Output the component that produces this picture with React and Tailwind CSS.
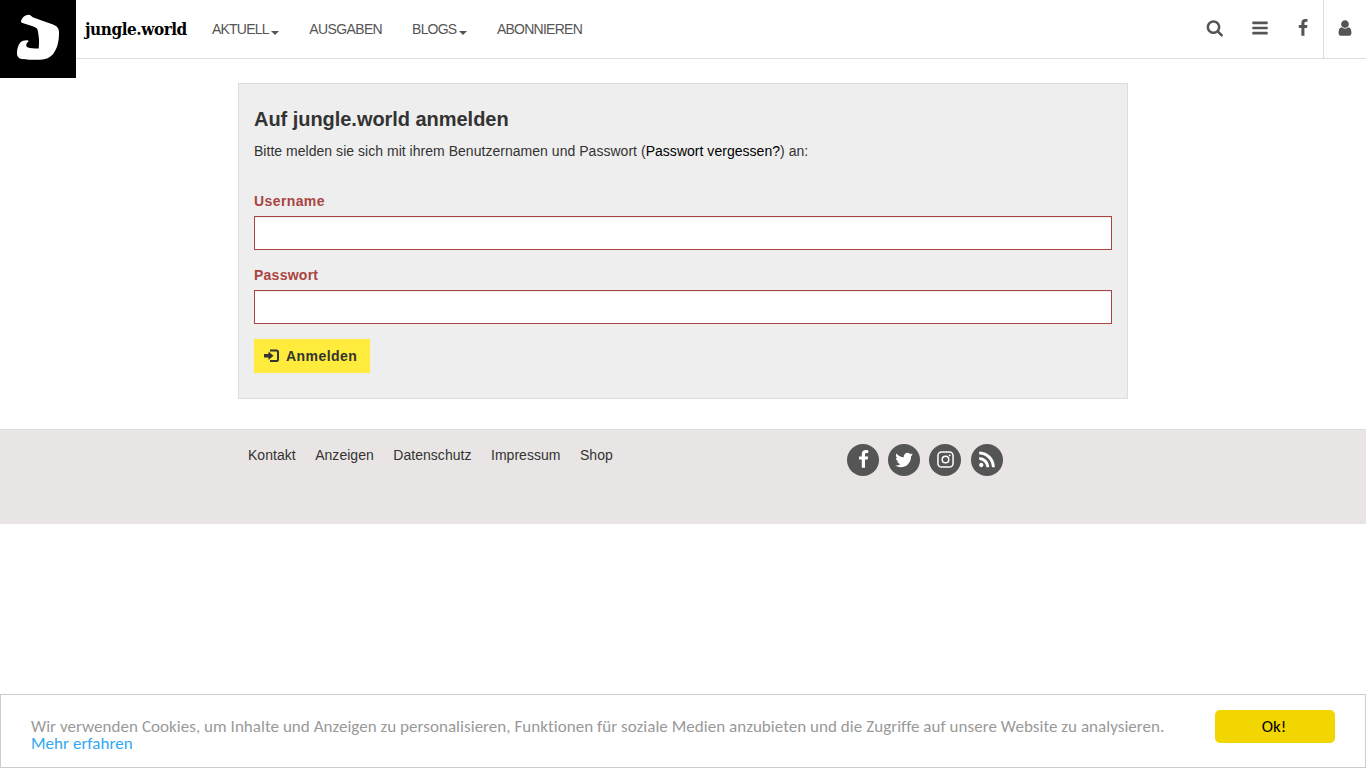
import React from 'react';

const PATHS = {
  search: 'M1216 832q0-185-131.5-316.5t-316.5-131.5-316.5 131.5-131.5 316.5 131.5 316.5 316.5 131.5 316.5-131.5 131.5-316.5zm512 832q0 52-38 90t-90 38q-54 0-90-38l-343-342q-179 124-399 124-143 0-273.5-55.5t-225-150-150-225-55.5-273.5 55.5-273.5 150-225 225-150 273.5-55.5 273.5 55.5 225 150 150 225 55.5 273.5q0 220-124 399l343 343q37 37 37 90z',
  bars: 'M1664 1344v128q0 26-19 45t-45 19h-1408q-26 0-45-19t-19-45v-128q0-26 19-45t45-19h1408q26 0 45 19t19 45zm0-512v128q0 26-19 45t-45 19h-1408q-26 0-45-19t-19-45v-128q0-26 19-45t45-19h1408q26 0 45 19t19 45zm0-512v128q0 26-19 45t-45 19h-1408q-26 0-45-19t-19-45v-128q0-26 19-45t45-19h1408q26 0 45 19t19 45z',
  facebook: 'M1343 12v264h-157q-86 0-116 36t-30 108v189h293l-39 296h-254v759h-306v-759h-255v-296h255v-218q0-186 104-288.5t277-102.5q147 0 228 12z',
  twitter: 'M1684 408q-67 98-162 167 1 14 1 42 0 130-38 259.5t-115.5 248.5-184.5 210.5-258 146-323 54.5q-271 0-496-145 35 4 78 4 225 0 401-138-105-2-188-64.5t-114-159.5q33 5 61 5 43 0 85-11-112-23-185.5-111.5t-73.5-205.5v-4q68 38 146 41-66-44-105-115t-39-154q0-88 44-163 121 149 294.5 238.5t371.5 99.5q-8-38-8-74 0-134 94.5-228.5t228.5-94.5q140 0 236 102 109-21 205-78-37 115-142 178 93-10 186-50z',
  user: 'M1536 1399q0 109-62.5 187t-150.5 78h-854q-88 0-150.5-78t-62.5-187q0-85 8.5-160.5t31.5-152 58.5-131 94-89 134.5-34.5q131 128 313 128t313-128q76 0 134.5 34.5t94 89 58.5 131 31.5 152 8.5 160.5zm-256-887q0 159-112.5 271.5t-271.5 112.5-271.5-112.5-112.5-271.5 112.5-271.5 271.5-112.5 271.5 112.5 112.5 271.5z',
  rss: 'M576 1344q0 80-56 136t-136 56-136-56-56-136 56-136 136-56 136 56 56 136zm512 123q2 28-17 48-18 21-47 21h-135q-25 0-43-16.5t-20-41.5q-22-229-184.5-391.5t-391.5-184.5q-25-2-41.5-20t-16.5-43v-135q0-29 21-47 17-17 43-17h5q160 13 306 80.5t259 181.5q114 113 181.5 259t80.5 306zm512 2q2 27-18 47-18 20-46 20h-143q-26 0-44.5-17.5t-19.5-42.5q-12-215-101-408.5t-231.5-336-336-231.5-408.5-102q-25-1-42.5-19.5t-17.5-43.5v-143q0-28 20-46 18-18 44-18h3q262 13 501.5 120t425.5 294q187 186 294 425.5t120 501.5z',
};

function Icon({ name, className }) {
  return (
    <svg viewBox="0 0 1792 1792" fill="currentColor" className={className} aria-hidden="true">
      <path d={PATHS[name]} />
    </svg>
  );
}

function Instagram() {
  return (
    <svg viewBox="0 0 18 18" fill="none" stroke="currentColor" strokeWidth="1.6" className="mb-px size-[17px]" aria-hidden="true">
      <rect x="1" y="1" width="16" height="16" rx="3.8" />
      <circle cx="9" cy="9" r="3.5" />
      <circle cx="13.4" cy="4.6" r="1" fill="currentColor" stroke="none" />
    </svg>
  );
}

function Caret() {
  return <span className="mt-[7px] ml-[2.600px] border-x-4 border-t-4 border-x-transparent border-t-[#555]" />;
}

function Social({ children }) {
  return <a className="flex size-8 items-center justify-center rounded-full bg-[#555] text-white">{children}</a>;
}

function Field({ label, type, id, tracking }) {
  return (
    <div className="mb-[15px]">
      <label htmlFor={id} className={`mb-[5px] block h-5 font-bold leading-5 text-[#a94442] ${tracking}`}>{label}</label>
      <input id={id} type={type} className="block h-[34px] w-full border border-[#a94442] bg-white px-3 shadow-[inset_0_1px_1px_rgba(0,0,0,0.075)]" />
    </div>
  );
}

export default function App() {
  return (
    <div className="flex h-screen flex-col overflow-hidden bg-white font-['Liberation_Sans',Arial,sans-serif] text-sm leading-5 text-[#333]">
      <header className="flex h-[59px] shrink-0 border-b border-[#ddd]">
        <a className="z-10 h-[78px] w-[76px] shrink-0 bg-black">
          <svg viewBox="0 0 76 78" className="h-[78px] w-[76px]" aria-label="Logo">
            <path fill="#fff" d="M21 21 C22 17.500 26 14.500 29 14.800 C31 15.200 31.500 17 34 17.700 L53 24.500 C57.500 26.500 59 28 59 33 C59 41 57.500 48 53.500 53.500 C50 58 46 59.300 40 59.800 C33 60 28 59.700 22 59 C18 58.500 16.700 56 17 52 C17.300 48 19 42 23 40.800 C26 39.800 28.800 40 28.500 41.500 C26 43.500 25.500 46 27.500 47.300 C30 48.500 34 48.500 38.700 48.500 C39.500 42 39 36 37.500 29.500 C36.500 27.500 35 27 32 26 L24 23.500 C22 23 21 22.500 21 21 Z" />
          </svg>
        </a>
        <a className="ml-[9px] w-[127px] shrink-0 pt-[19px] font-['DejaVu_Serif_Condensed','DejaVu_Serif',serif] text-[17px] font-bold leading-5 tracking-[-0.450px] text-black">jungle.world</a>
        <nav className="flex h-[58px] items-center gap-[30px] text-[#555]">
          <a className="flex items-center tracking-[-0.800px]">AKTUELL<Caret /></a>
          <a className="tracking-[-0.620px]">AUSGABEN</a>
          <a className="flex items-center tracking-[-0.800px]">BLOGS<Caret /></a>
          <a className="tracking-[-0.750px]">ABONNIEREN</a>
        </nav>
        <div className="ml-auto flex h-[58px] items-center text-[#555]">
          <Icon name="search" className="mr-[27.5px] mb-[2px] size-[17.5px]" />
          <Icon name="bars" className="mr-[25px] mb-[2px] size-[18px]" />
          <Icon name="facebook" className="mr-[11px] mb-[2px] size-[18px]" />
          <div className="flex h-full w-[43px] items-center justify-center border-l border-[#ddd]">
            <Icon name="user" className="mb-[2px] size-[18px]" />
          </div>
        </div>
      </header>

      <main className="mx-auto mt-6 h-[316px] w-[890px] shrink-0 border border-[#ddd] bg-[#eee] px-[15px] pt-[24px]">
        <h1 className="text-[20px] font-bold leading-[23px] tracking-[-0.040px]">Auf jungle.world anmelden</h1>
        <p className="mt-[10px] mb-[30px] tracking-[0.030px]">Bitte melden sie sich mit ihrem Benutzernamen und Passwort (<a className="text-black">Passwort vergessen?</a>) an:</p>
        <Field label="Username" type="text" id="username" tracking="tracking-[0.400px]" />
        <Field label="Passwort" type="password" id="password" tracking="tracking-[0.250px]" />
        <button className="flex h-[34px] w-[116px] items-center bg-[#ffeb3b] pl-[10px] font-bold tracking-[0.450px]">
          <svg viewBox="0 0 16 14" className="mr-[6px] h-[14px] w-4" fill="none" aria-hidden="true">
            <path d="M6 1.500H12.500Q14 1.500 14 3V10.500Q14 12 12.500 12H6" stroke="#333" strokeWidth="2" />
            <path d="M0 5H4.500V2.500L9.500 6.800L4.500 11V8.500H0Z" fill="#333" />
          </svg>
          Anmelden
        </button>
      </main>

      <footer className="mt-[30px] h-[95px] shrink-0 border-t border-[#ddd] bg-[#e9e5e4]">
        <div className="mx-auto flex w-[870px] pt-[14px]">
          <nav className="flex w-[599px] gap-[19.5px] pt-[1px] tracking-[0.030px]">
            <a>Kontakt</a><a>Anzeigen</a><a>Datenschutz</a><a>Impressum</a><a>Shop</a>
          </nav>
          <div className="flex gap-[9.200px]">
            <Social><Icon name="facebook" className="mb-px size-[19px]" /></Social>
            <Social><Icon name="twitter" className="mb-px size-5" /></Social>
            <Social><Instagram /></Social>
            <Social><Icon name="rss" className="mb-px size-5" /></Social>
          </div>
        </div>
      </footer>

      <aside className="mt-auto flex h-[74px] shrink-0 items-start justify-between border border-[#ccc] bg-white px-[30px] pt-[15px] font-[Carlito,Calibri,Lato,sans-serif] text-[17px] tracking-[0.040px]">
        <p className="pt-[8px] leading-[17px] whitespace-nowrap text-[#999]">
          Wir verwenden Cookies, um Inhalte und Anzeigen zu personalisieren, Funktionen für soziale Medien anzubieten und die Zugriffe auf unsere Website zu analysieren.<br />
          <a className="text-[#31a8f0]">Mehr erfahren</a>
        </p>
        <button className="h-[33px] w-[120px] rounded-[5px] bg-[#f1d600] pr-[2px] text-black">Ok!</button>
      </aside>
    </div>
  );
}
